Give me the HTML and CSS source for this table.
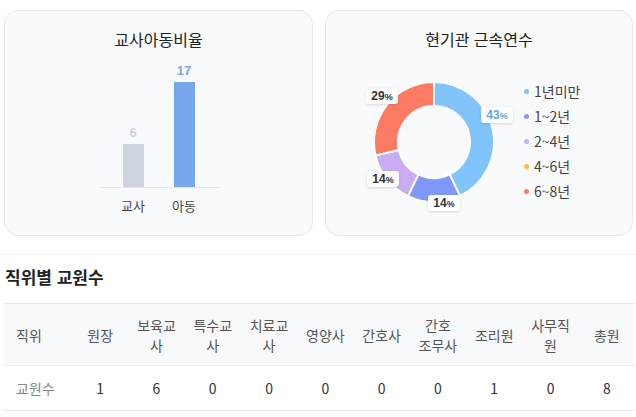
FILE: index.html
```html
<!DOCTYPE html>
<html lang="ko">
<head>
<meta charset="utf-8">
<link rel="stylesheet" href="styles.css">
</head>
<body>
<div class="page">
  <div class="cards">
    <section class="card">
      <h2 class="card-title">교사아동비율</h2>
      <div class="plot">
        <div class="col">
          <span class="val val-t">6</span>
          <div class="bar bar-t" style="height:43px"></div>
        </div>
        <div class="col">
          <span class="val val-c">17</span>
          <div class="bar bar-c" style="height:105px"></div>
        </div>
      </div>
      <div class="cats">
        <span class="cat">교사</span>
        <span class="cat">아동</span>
      </div>
    </section>
    <section class="card">
      <h2 class="card-title">현기관 근속연수</h2>
      <div class="donut-row">
        <div class="donut">
          <svg width="124" height="124" viewBox="0 0 124 124">
            <g stroke="#ffffff" stroke-width="2" stroke-linejoin="round">
              <path fill="#80c4fb" d="M62 2 A60 60 0 0 1 88.03 116.06 L77.62 94.43 A36 36 0 0 0 62 26 Z"/>
              <path fill="#8198fb" d="M88.03 116.06 A60 60 0 0 1 35.97 116.06 L46.38 94.43 A36 36 0 0 0 77.62 94.43 Z"/>
              <path fill="#c9acf3" d="M35.97 116.06 A60 60 0 0 1 3.5 75.35 L26.9 70.01 A36 36 0 0 0 46.38 94.43 Z"/>
              <path fill="#fe7b63" d="M3.5 75.35 A60 60 0 0 1 62 2 L62 26 A36 36 0 0 0 26.9 70.01 Z"/>
            </g>
          </svg>
          <span class="pct pct-a">29<small>%</small></span>
          <span class="pct pct-b pct-blue">43<small>%</small></span>
          <span class="pct pct-c">14<small>%</small></span>
          <span class="pct pct-d">14<small>%</small></span>
        </div>
        <ul class="legend">
          <li><i class="dot d1"></i>1년미만</li>
          <li><i class="dot d2"></i>1~2년</li>
          <li><i class="dot d3"></i>2~4년</li>
          <li><i class="dot d4"></i>4~6년</li>
          <li><i class="dot d5"></i>6~8년</li>
        </ul>
      </div>
    </section>
  </div>

  <div class="section">
    <h3 class="section-title">직위별 교원수</h3>
    <table class="staff">
      <thead>
        <tr>
          <th class="first">직위</th>
          <th>원장</th>
          <th>보육교사</th>
          <th>특수교사</th>
          <th>치료교사</th>
          <th>영양사</th>
          <th>간호사</th>
          <th class="keep">간호 조무사</th>
          <th>조리원</th>
          <th>사무직원</th>
          <th>총원</th>
        </tr>
      </thead>
      <tbody>
        <tr>
          <td class="first">교원수</td>
          <td>1</td>
          <td>6</td>
          <td>0</td>
          <td>0</td>
          <td>0</td>
          <td>0</td>
          <td>0</td>
          <td>1</td>
          <td>0</td>
          <td>8</td>
        </tr>
      </tbody>
    </table>
  </div>
</div>
</body>
</html>
```
FILE: styles.css
```css
* { box-sizing: border-box; }
html, body {
  margin: 0;
  padding: 0;
  background: #ffffff;
  font-family: "Noto Sans CJK KR", "Noto Sans", sans-serif;
  color: #333;
}
.page {
  width: 636px;
  padding: 10px 0 0 0;
}
.cards {
  display: grid;
  grid-template-columns: 309px 308px;
  column-gap: 12px;
  margin-left: 4px;
}
.card {
  position: relative;
  height: 226px;
  background: #f9fafc;
  border: 1px solid #e6e8ec;
  border-radius: 14px;
  display: flex;
  flex-direction: column;
}
.card-title {
  margin: 0;
  padding-top: 16px;
  font-size: 16px;
  font-weight: 400;
  line-height: 24px;
  text-align: center;
  color: #222;
}
.plot {
  width: 120px;
  height: 137px;
  margin: 0 auto;
  border-bottom: 1px solid #e3e6ea;
  display: flex;
  justify-content: center;
  align-items: flex-end;
  gap: 30px;
}
.col {
  width: 21px;
  display: flex;
  flex-direction: column;
  align-items: center;
}
.val {
  font-family: "Liberation Sans", "Noto Sans CJK KR", sans-serif;
  font-size: 13px;
  font-weight: 700;
  line-height: 16px;
  margin-bottom: 3px;
}
.val-t { color: #cdd3e2; }
.val-c { color: #7aa6ea; }
.bar { width: 21px; }
.bar-t { background: #cfd4e1; }
.bar-c { background: #77a7ea; }
.cats {
  display: flex;
  justify-content: center;
  gap: 30px;
  margin-top: 9px;
}
.cat {
  width: 21px;
  display: flex;
  justify-content: center;
  white-space: nowrap;
  font-size: 13px;
  line-height: 18px;
  color: #444;
}
.donut-row {
  display: flex;
  align-items: center;
  padding-left: 46px;
  margin-top: 28px;
  gap: 28px;
}
.donut {
  position: relative;
  width: 124px;
  height: 124px;
}
.donut svg { display: block; }
.pct {
  position: absolute;
  width: 32px;
  height: 16px;
  background: #fff;
  border-radius: 3px;
  box-shadow: 0 1px 3px rgba(0,0,0,0.14);
  font-family: "Liberation Sans", "Noto Sans CJK KR", sans-serif;
  font-size: 12px;
  font-weight: 700;
  line-height: 16px;
  text-align: center;
  color: #333;
}
.pct small { font-size: 9px; }
.pct-blue { color: #62a3e4; }
.pct-a { left: -6px; top: 8px; }
.pct-b { left: 109px; top: 27px; }
.pct-c { left: -5px; top: 91px; }
.pct-d { left: 56px; top: 115px; }
.legend {
  list-style: none;
  margin: 0;
  padding: 0;
}
.legend li {
  display: flex;
  align-items: center;
  font-size: 14px;
  line-height: 25px;
  color: #444;
}
.dot {
  width: 5px;
  height: 5px;
  border-radius: 50%;
  margin-right: 5px;
}
.d1 { background: #80c4fb; }
.d2 { background: #8198fb; }
.d3 { background: #c9acf3; }
.d4 { background: #fdc13a; }
.d5 { background: #fe7b63; }
.section {
  margin-top: 18px;
  border-top: 1px solid #eef0f2;
}
.section-title {
  margin: 0;
  padding: 10px 0 0 5px;
  font-size: 17px;
  font-weight: 700;
  line-height: 24px;
  color: #222;
}
.staff {
  margin: 14px 0 0 3px;
  width: 632px;
  border-collapse: collapse;
  table-layout: fixed;
}
.staff th, .staff td {
  font-size: 14px;
  font-weight: 400;
  text-align: center;
  padding: 0 6px;
}
.staff th {
  background: #f8f9fb;
  color: #555;
  height: 62px;
  line-height: 20px;
  border-top: 1px solid #e6e8eb;
  border-bottom: 1px solid #eef0f2;
}
.staff th.keep { word-break: keep-all; }
.staff td {
  height: 45px;
  color: #333;
  border-bottom: 1px solid #e6e8eb;
}
.staff .first {
  width: 69px;
  text-align: left;
  padding-left: 13px;
}
.staff td.first { color: #888; }
```
